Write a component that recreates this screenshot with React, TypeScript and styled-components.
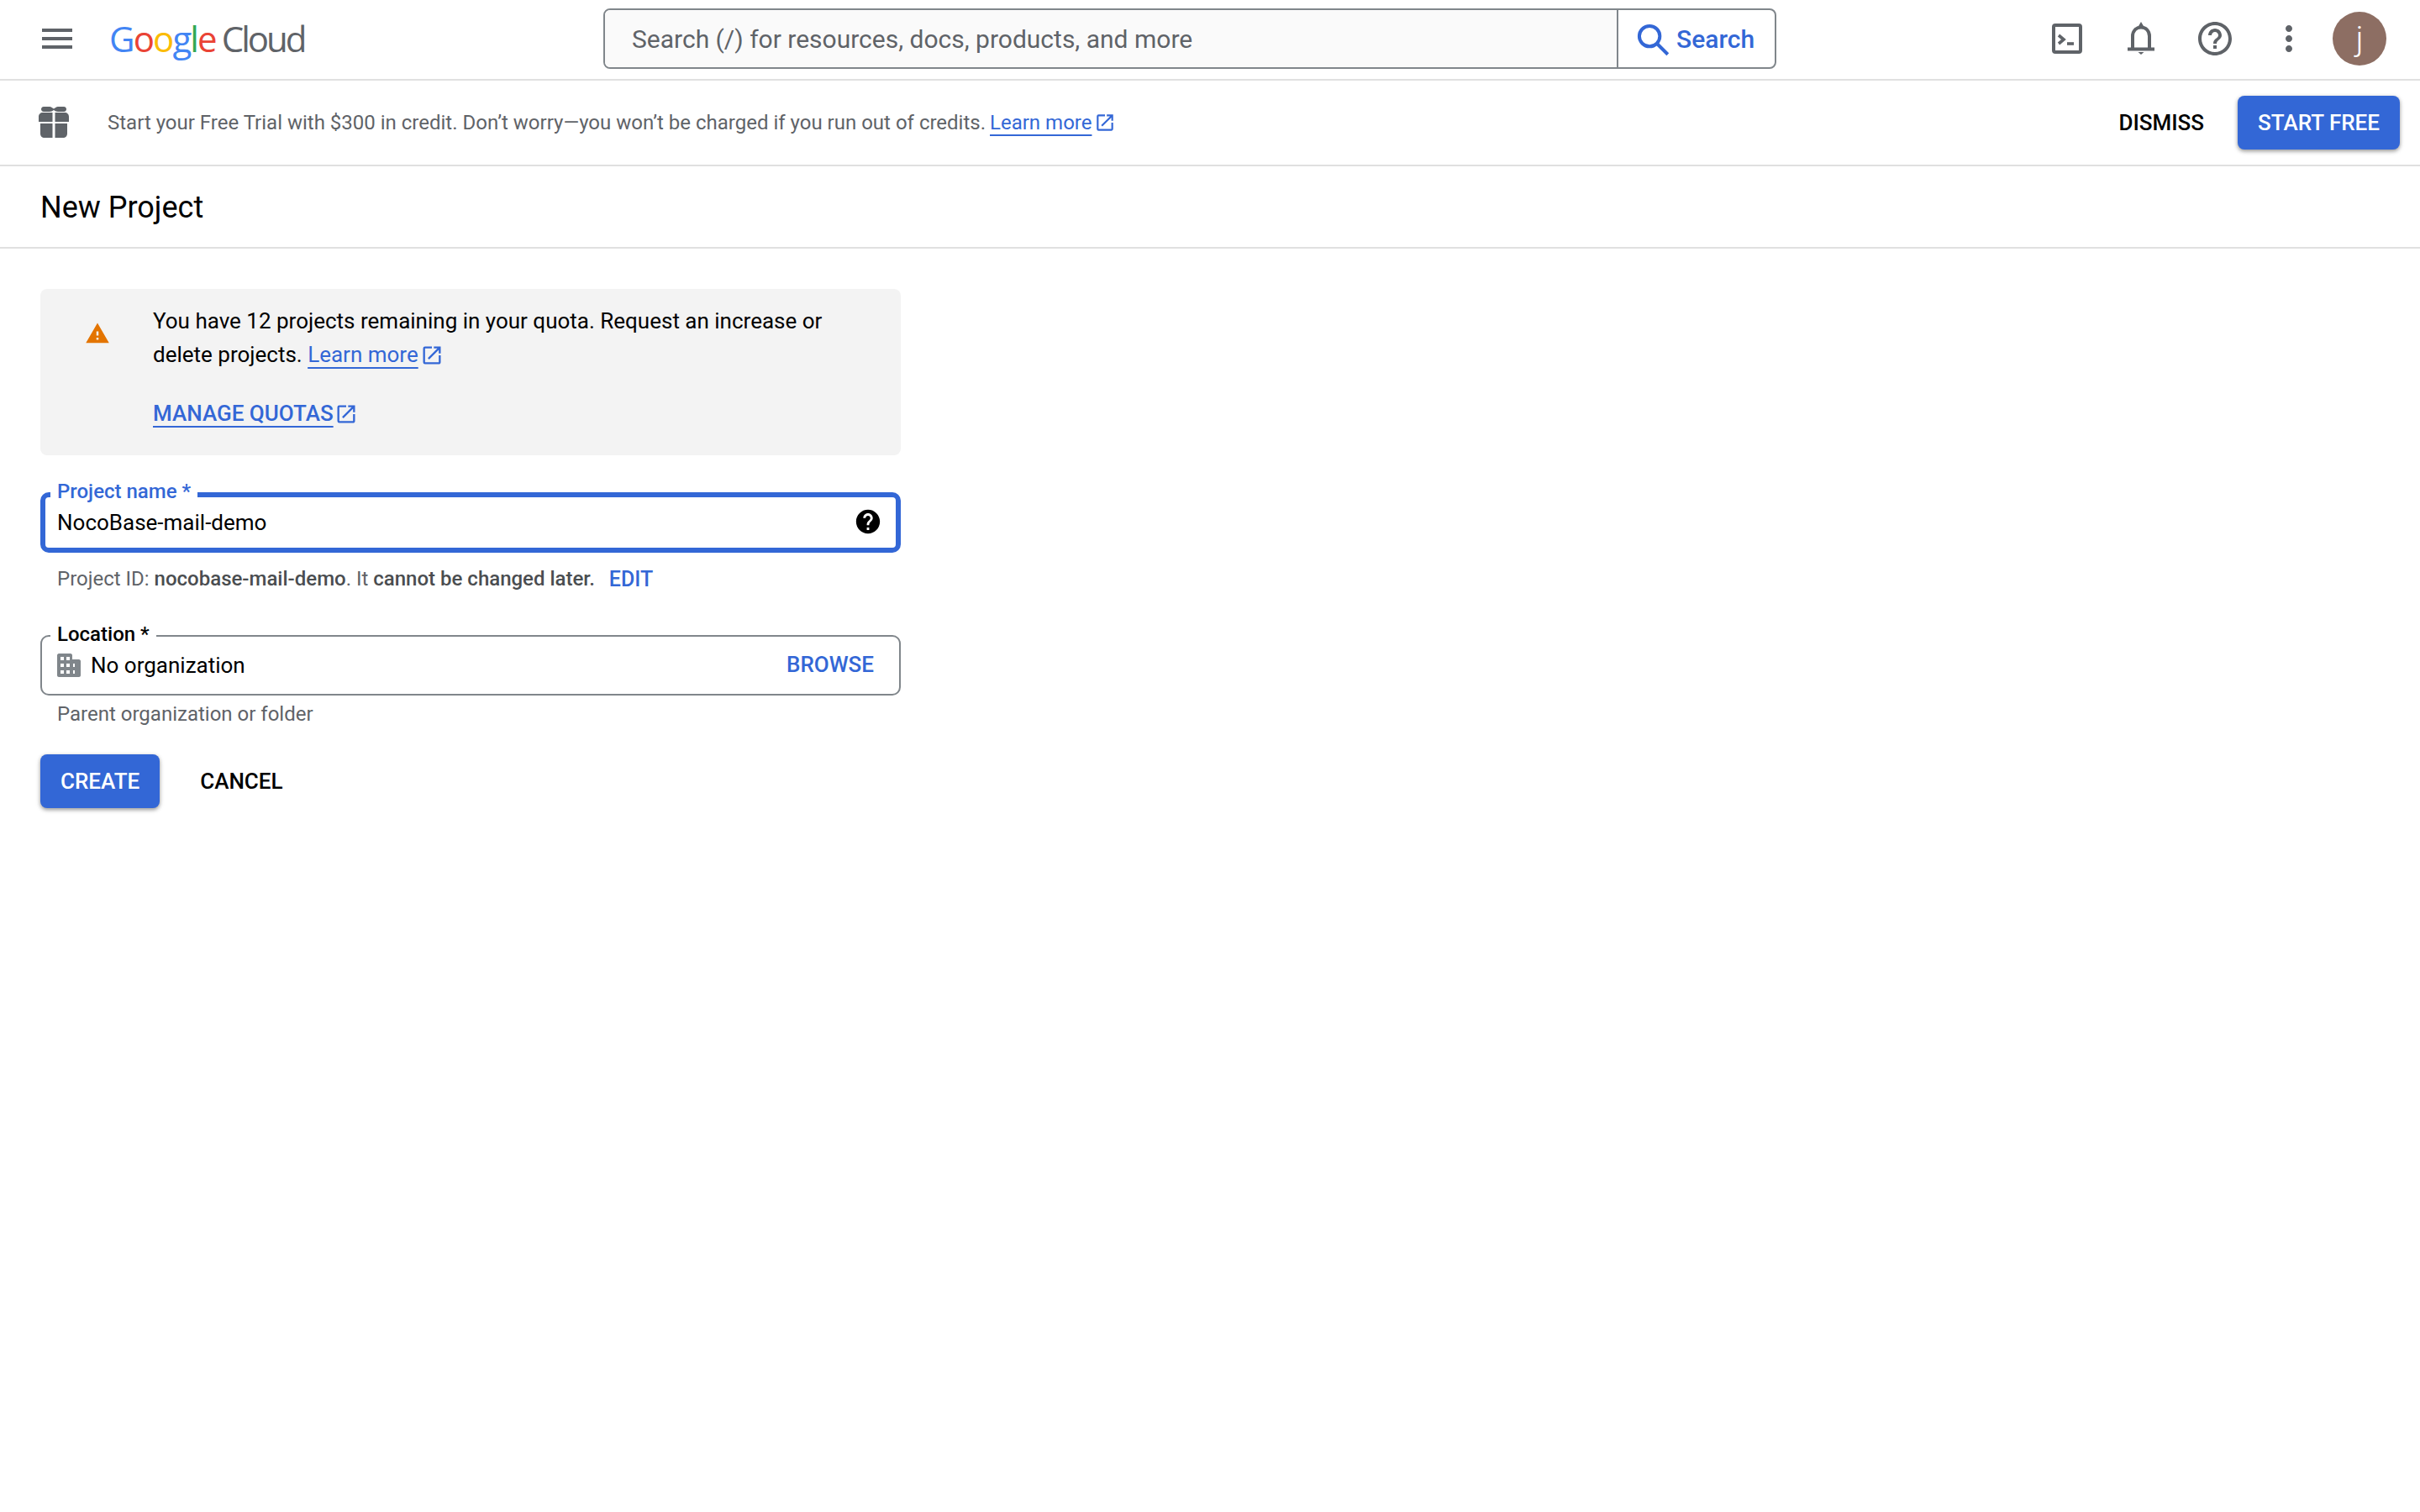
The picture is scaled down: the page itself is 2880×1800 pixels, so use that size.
import React from "react";
import styled, { createGlobalStyle } from "styled-components";

const Global = createGlobalStyle`
  html, body { margin: 0; padding: 0; background: #fff; }
  body { font-family: Roboto, "Liberation Sans", sans-serif; color: #000; }
  * { box-sizing: border-box; }
`;

const BLUE = "#3367d6";
const GREY = "#5f6368";
const LINE = "#e0e0e0";

const Page = styled.div`
  width: 100%;
  min-height: 1800px;
  background: #fff;
`;

const Header = styled.header`
  display: flex;
  align-items: center;
  height: 96px;
  padding: 0 40px 2px 44px;
  border-bottom: 2px solid ${LINE};
`;

const MenuButton = styled.div`
  display: flex;
  width: 48px;
  height: 48px;
  color: #5f6368;
`;

const Logo = styled.div`
  display: flex;
  align-items: baseline;
  width: 232px;
  margin-left: 38px;
  font-family: "Open Sans", sans-serif;
  font-size: 42px;
  line-height: 50px;
  letter-spacing: -1.9px;
  white-space: nowrap;
`;

const LogoLetter = styled.span<{ $color: string }>`
  color: ${(p) => p.$color};
`;

const LogoCloud = styled.span`
  margin-left: 7px;
  color: ${GREY};
  letter-spacing: -3px;
`;

const SearchBox = styled.div`
  display: flex;
  width: 1396px;
  height: 72px;
  margin-left: 356px;
  border: 2px solid #80868b;
  border-radius: 8px;
  overflow: hidden;
`;

const SearchInput = styled.div`
  display: flex;
  align-items: center;
  flex: 1;
  padding: 1px 0 0 32px;
  background: #fafafa;
  color: ${GREY};
  font-size: 30px;
  border-right: 2px solid #80868b;
`;

const SearchButton = styled.div`
  display: flex;
  align-items: center;
  gap: 8px;
  width: 186px;
  padding: 1px 0 0 21px;
  color: ${BLUE};
  font-size: 30px;
  font-weight: 500;
`;

const HeaderIcons = styled.div`
  display: flex;
  align-items: center;
  margin-left: auto;
`;

const IconSlot = styled.div`
  display: flex;
  justify-content: center;
  width: 88px;
  color: #5f6368;
`;

const Avatar = styled.div`
  display: flex;
  align-items: center;
  justify-content: center;
  width: 64px;
  height: 64px;
  margin-left: 8px;
  border-radius: 50%;
  background: #8d6e63;
  color: #fff;
  font-size: 40px;
  font-weight: 300;
`;

const Banner = styled.div`
  display: flex;
  align-items: center;
  height: 102px;
  padding: 0 24px 0 46px;
  border-bottom: 2px solid ${LINE};
`;

const BannerText = styled.div`
  display: flex;
  align-items: center;
  gap: 5px;
  margin-left: 46px;
  color: ${GREY};
  font-size: 24px;
`;

const TextLink = styled.a`
  color: ${BLUE};
  text-decoration: underline;
  text-decoration-thickness: 2px;
  text-underline-offset: 6px;
`;

const LinkIcon = styled.svg<{ $size: number; $gap: number }>`
  display: inline-block;
  flex: none;
  width: ${(p) => p.$size}px;
  height: ${(p) => p.$size}px;
  margin-left: ${(p) => p.$gap}px;
  vertical-align: -6px;
  fill: ${BLUE};
`;

const BannerActions = styled.div`
  display: flex;
  align-items: center;
  gap: 16px;
  margin-left: auto;
`;

const TextButton = styled.div`
  display: flex;
  align-items: center;
  height: 64px;
  padding: 0 24px;
  color: #000;
  font-size: 26px;
  font-weight: 500;
`;

const PrimaryButton = styled.div`
  display: flex;
  align-items: center;
  height: 64px;
  padding: 0 24px;
  border-radius: 8px;
  background: ${BLUE};
  color: #fff;
  font-size: 26px;
  font-weight: 500;
  box-shadow: 0 2px 4px rgba(0, 0, 0, 0.3), 0 2px 6px rgba(0, 0, 0, 0.15);
`;

const TitleBar = styled.div`
  display: flex;
  align-items: center;
  height: 98px;
  padding: 2px 48px 0;
  border-bottom: 2px solid ${LINE};
  font-size: 36px;
`;

const Main = styled.main`
  width: 1120px;
  padding: 48px 48px 0;
`;

const Alert = styled.div`
  display: flex;
  height: 198px;
  padding: 18px 0 0 53px;
  border-radius: 8px;
  background: #f3f3f3;
  font-size: 26px;
  line-height: 40px;
`;

const AlertIcon = styled.svg`
  flex: none;
  width: 30px;
  height: 30px;
  margin: 20px 51px 0 0;
  fill: #e37400;
`;

const AlertBody = styled.div`
  width: 810px;
`;

const AlertAction = styled(TextLink)`
  display: block;
  margin-top: 30px;
  font-weight: 500;
`;

const Field = styled.div<{ $focused?: boolean; $top: number }>`
  position: relative;
  display: flex;
  align-items: center;
  height: 72px;
  margin-top: ${(p) => p.$top}px;
  padding: ${(p) => (p.$focused ? "0 16px 0 14px" : "0 30px 0 18px")};
  border: ${(p) => (p.$focused ? `6px solid ${BLUE}` : "2px solid #80868b")};
  border-radius: 10px;
  font-size: 26px;
`;

const FieldLabel = styled.label<{ $focused?: boolean }>`
  position: absolute;
  top: ${(p) => (p.$focused ? -22 : -18)}px;
  left: ${(p) => (p.$focused ? 6 : 10)}px;
  padding: 0 8px;
  background: #fff;
  color: ${(p) => (p.$focused ? BLUE : "#000")};
  font-size: 24px;
  font-weight: 500;
  line-height: 30px;
`;

const FieldValue = styled.div`
  flex: 1;
`;

const HelpIcon = styled.svg`
  width: 34px;
  height: 34px;
  margin-top: -2px;
  fill: #000;
`;

const OrgIcon = styled.svg`
  flex: none;
  width: 28px;
  height: 28px;
  margin-right: 12px;
`;

const BrowseLink = styled.div`
  margin-top: -2px;
  color: ${BLUE};
  font-size: 26px;
  font-weight: 500;
`;

const Hint = styled.div<{ $top: number }>`
  display: flex;
  align-items: center;
  height: 32px;
  margin-top: ${(p) => p.$top}px;
  padding-left: 20px;
  color: ${GREY};
  font-size: 24px;
  white-space: pre;
`;

const Strong = styled.span`
  color: #4a4d50;
  font-weight: 500;
`;

const EditLink = styled.span`
  margin-left: 17px;
  color: ${BLUE};
  font-size: 25px;
  font-weight: 500;
`;

const Actions = styled.div`
  display: flex;
  align-items: center;
  gap: 24px;
  margin-top: 32px;
`;

const EXTERNAL =
  "M19 19H5V5h7V3H5a2 2 0 0 0-2 2v14a2 2 0 0 0 2 2h14c1.1 0 2-.9 2-2v-7h-2v7zM14 3v2h3.59l-9.83 9.83 1.41 1.41L19 6.41V10h2V3h-7z";

const ExternalLink = ({ size, gap }: { size: number; gap: number }) => (
  <LinkIcon viewBox="0 0 24 24" $size={size} $gap={gap}>
    <path d={EXTERNAL} />
  </LinkIcon>
);

const GOOGLE: [string, string][] = [
  ["G", "#4285f4"],
  ["o", "#ea4335"],
  ["o", "#fbbc05"],
  ["g", "#4285f4"],
  ["l", "#34a853"],
  ["e", "#ea4335"],
];

export default function App() {
  return (
    <Page>
      <Global />
      <Header>
        <MenuButton>
          <svg viewBox="0 0 24 24" width="48" height="48" fill="currentColor">
            <path d="M3 18h18v-2H3v2zm0-5h18v-2H3v2zm0-7v2h18V6H3z" />
          </svg>
        </MenuButton>
        <Logo>
          {GOOGLE.map(([ch, color], i) => (
            <LogoLetter key={i} $color={color}>
              {ch}
            </LogoLetter>
          ))}
          <LogoCloud>Cloud</LogoCloud>
        </Logo>
        <SearchBox>
          <SearchInput>Search (/) for resources, docs, products, and more</SearchInput>
          <SearchButton>
            <svg viewBox="0 0 36 36" width="40" height="40" fill="none" stroke={BLUE} strokeWidth="3.6">
              <circle cx="14.5" cy="14.5" r="11" />
              <path d="M22.5 22.5L34 34" />
            </svg>
            Search
          </SearchButton>
        </SearchBox>
        <HeaderIcons>
          <IconSlot>
            <svg viewBox="0 0 48 48" width="48" height="48" fill="none" stroke="currentColor">
              <rect x="8" y="8" width="32" height="32" rx="2" strokeWidth="4" />
              <path d="M14 20l6 5-6 5" strokeWidth="3.6" />
              <path d="M24 30h8" strokeWidth="3.6" />
            </svg>
          </IconSlot>
          <IconSlot>
            <svg viewBox="0 0 48 48" width="48" height="48" fill="none" stroke="currentColor" strokeWidth="4">
              <path d="M14 35V21c0-6 4-10.5 10-10.5S34 15 34 21v14" />
              <path d="M8 36.5h32" />
              <path d="M20.5 40h7l-3.5 3z" fill="currentColor" stroke="none" />
              <path d="M21 9l3-5 3 5z" fill="currentColor" stroke="none" />
            </svg>
          </IconSlot>
          <IconSlot>
            <svg viewBox="0 0 24 24" width="48" height="48" fill="currentColor">
              <path d="M11 18h2v-2h-2v2zm1-16C6.48 2 2 6.48 2 12s4.48 10 10 10 10-4.48 10-10S17.52 2 12 2zm0 18c-4.41 0-8-3.59-8-8s3.59-8 8-8 8 3.59 8 8-3.59 8-8 8zm0-14c-2.21 0-4 1.79-4 4h2c0-1.1.9-2 2-2s2 .9 2 2c0 2-3 1.75-3 5h2c0-2.25 3-2.5 3-5 0-2.21-1.79-4-4-4z" />
            </svg>
          </IconSlot>
          <IconSlot>
            <svg viewBox="0 0 24 24" width="48" height="48" fill="currentColor">
              <path d="M12 8c1.1 0 2-.9 2-2s-.9-2-2-2-2 .9-2 2 .9 2 2 2zm0 2c-1.1 0-2 .9-2 2s.9 2 2 2 2-.9 2-2-.9-2-2-2zm0 6c-1.1 0-2 .9-2 2s.9 2 2 2 2-.9 2-2-.9-2-2-2z" />
            </svg>
          </IconSlot>
          <Avatar>j</Avatar>
        </HeaderIcons>
      </Header>

      <Banner>
        <svg viewBox="0 0 36 38" width="36" height="38" fill={GREY}>
          <path d="M6 0h7c2 0 3.500 1.500 5 2.500C19.500 1.500 21 0 23 0h7c2 0 3 1.500 3 3s-1 3-3 3h-7c-2 0-3.500-1-5-2-1.500 1-3 2-5 2H6C4 6 3 4.500 3 3s1-3 3-3z" />
          <path d="M5 7h11.500v11H0v-6c0-3 2-5 5-5zM19.500 7H31c3 0 5 2 5 5v6H19.500z" />
          <path d="M2 20h14.500v17H7c-3 0-5-2-5-5zM19.500 20H34v12c0 3-2 5-5 5h-9.500z" />
        </svg>
        <BannerText>
          <span>Start your Free Trial with $300 in credit. Don’t worry—you won’t be charged if you run out of credits.</span>
          <TextLink>Learn more</TextLink>
          <ExternalLink size={26} gap={-2} />
        </BannerText>
        <BannerActions>
          <TextButton>DISMISS</TextButton>
          <PrimaryButton>START FREE</PrimaryButton>
        </BannerActions>
      </Banner>

      <TitleBar>New Project</TitleBar>

      <Main>
        <Alert>
          <AlertIcon viewBox="0 0 24 24">
            <path d="M1 21h22L12 2 1 21zm12-3h-2v-2h2v2zm0-4h-2v-4h2v4z" />
          </AlertIcon>
          <AlertBody>
            You have 12 projects remaining in your quota. Request an increase or delete projects.{" "}
            <TextLink>Learn more</TextLink>
            <ExternalLink size={28} gap={2} />
            <AlertAction>
              MANAGE QUOTAS
              <ExternalLink size={28} gap={1} />
            </AlertAction>
          </AlertBody>
        </Alert>

        <Field $focused $top={44}>
          <FieldLabel $focused>Project name *</FieldLabel>
          <FieldValue>NocoBase-mail-demo</FieldValue>
          <HelpIcon viewBox="0 0 24 24">
            <path d="M12 2C6.48 2 2 6.48 2 12s4.48 10 10 10 10-4.48 10-10S17.52 2 12 2zm1 17h-2v-2h2v2zm2.07-7.750l-.9.92C13.45 12.9 13 13.5 13 15h-2v-.5c0-1.100.45-2.100 1.170-2.830l1.240-1.260c.37-.36.59-.86.59-1.410 0-1.100-.9-2-2-2s-2 .9-2 2H8c0-2.210 1.790-4 4-4s4 1.790 4 4c0 .88-.36 1.680-.93 2.250z" />
          </HelpIcon>
        </Field>
        <Hint $top={15}>
          Project ID: <Strong>nocobase-mail-demo</Strong>. It <Strong>cannot be changed later.</Strong>
          <EditLink>EDIT</EditLink>
        </Hint>

        <Field $top={51}>
          <FieldLabel>Location *</FieldLabel>
          <OrgIcon viewBox="0 0 28 28">
            <path
              fillRule="evenodd"
              fill="#80868b"
              d="M2 0h14c1 0 2 1 2 2v5h8c1 0 2 1 2 2v17c0 1-1 2-2 2H2c-1 0-2-1-2-2V2C0 1 1 0 2 0zM4 4v4h4V4zm7 0v4h4V4zM4 12v4h4v-4zm7 0v4h4v-4zM4 20v4h4v-4zm7 0v4h4v-4zm8-8v4h2v-4zm0 8v4h2v-4z"
            />
          </OrgIcon>
          <FieldValue>No organization</FieldValue>
          <BrowseLink>BROWSE</BrowseLink>
        </Field>
        <Hint $top={6}>Parent organization or folder</Hint>

        <Actions>
          <PrimaryButton>CREATE</PrimaryButton>
          <TextButton>CANCEL</TextButton>
        </Actions>
      </Main>
    </Page>
  );
}
